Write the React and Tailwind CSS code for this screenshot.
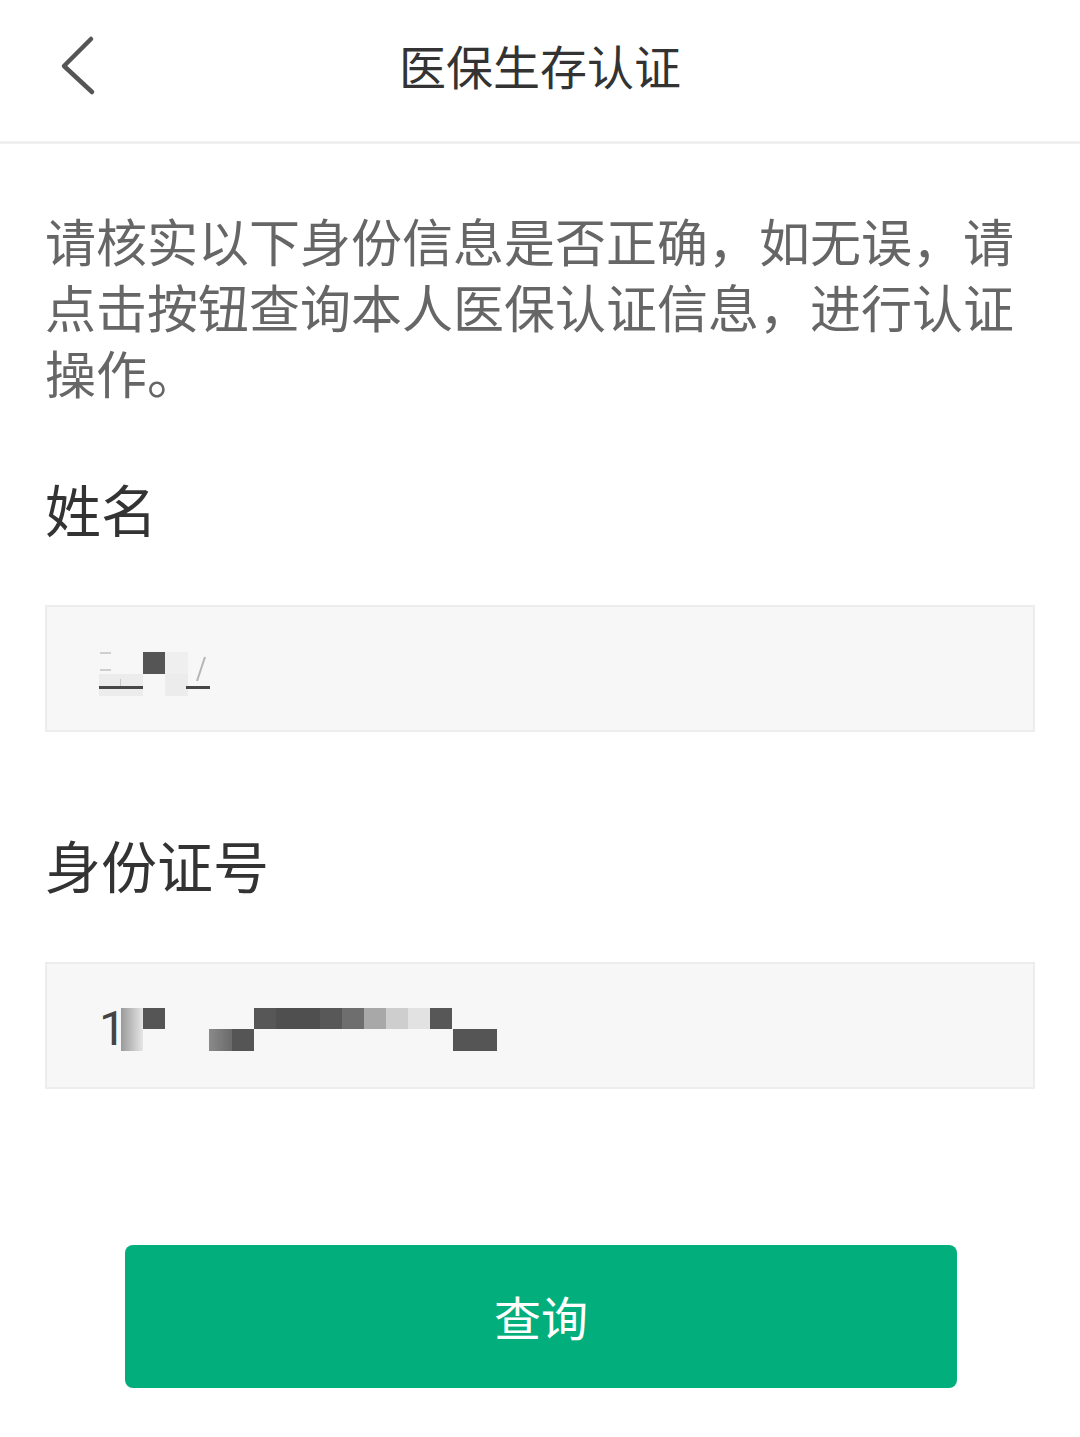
import React from 'react';

const font = { fontFamily: '"Noto Sans CJK SC", "Noto Sans", sans-serif' };

// pixelated name, as in the screenshot
const NameMosaic = () => (
  <svg width="115" height="56" viewBox="0 0 115 56">
    <rect x="1" y="7" width="11" height="2" fill="#cfcfcf" />
    <rect x="1" y="24" width="11" height="2" fill="#cfcfcf" />
    <rect x="0" y="29" width="44" height="22" fill="#ececec" />
    <rect x="21" y="34" width="1" height="8" fill="#c8c8c8" />
    <rect x="0" y="41" width="44" height="3" fill="#474747" />
    <rect x="44" y="7" width="22" height="22" fill="#555555" />
    <rect x="66" y="7" width="23" height="22" fill="#efefef" />
    <rect x="66" y="29" width="23" height="22" fill="#ececec" />
    <line x1="106" y1="12" x2="98" y2="36" stroke="#b5b5b5" strokeWidth="2" />
    <rect x="87" y="41" width="24" height="3" fill="#474747" />
  </svg>
);

const idRow = ['#575757', '#4f4f4f', '#4f4f4f', '#585858', '#6e6e6e', '#a8a8a8', '#cecece', '#e2e2e2', '#575757'];

const IdMosaic = () => (
  <svg width="380" height="56" viewBox="0 0 380 56">
    <defs>
      <linearGradient id="fadeA" x1="0" x2="1" y1="0" y2="0">
        <stop offset="0" stopColor="#8c8c8c" />
        <stop offset="1" stopColor="#e6e6e6" />
      </linearGradient>
      <linearGradient id="fadeB" x1="0" x2="1" y1="0" y2="0">
        <stop offset="0" stopColor="#8a8a8a" />
        <stop offset="1" stopColor="#6a6a6a" />
      </linearGradient>
    </defs>
    <rect x="-4" y="7" width="26" height="43" fill="url(#fadeA)" />
    <rect x="22" y="7" width="22" height="21" fill="#555555" />
    <rect x="88" y="28" width="23" height="22" fill="url(#fadeB)" />
    <rect x="111" y="28" width="22" height="22" fill="#555555" />
    {idRow.map((c, i) => (
      <rect key={i} x={133 + i * 22} y="7" width="22" height="21" fill={c} />
    ))}
    <rect x="332" y="28" width="44" height="22" fill="#555555" />
  </svg>
);

const Field = ({ children, pt }) => (
  <div className={`h-[127px] bg-[#f7f7f7] border-2 border-[#ededed] flex items-center pl-[52px] ${pt}`}>
    {children}
  </div>
);

export default function App() {
  return (
    <div className="w-[1080px] min-h-[1437px] bg-white" style={font}>
      <header className="relative h-[144px] flex items-center justify-center border-b-[3px] border-[#f0f0f0]">
        <svg className="absolute left-[56px] top-[34px]" width="42" height="64" viewBox="0 0 42 64">
          <polyline points="35,5 8,32 36,58" fill="none" stroke="#555" strokeWidth="4.5" strokeLinecap="round" strokeLinejoin="round" />
        </svg>
        <h1 className="text-[47px] leading-none text-[#333] -mt-[12px]">医保生存认证</h1>
      </header>

      <main className="px-[45px]">
        <p className="mt-[63px] w-[990px] text-[51px] leading-[66px] text-[#666]">
          请核实以下身份信息是否正确，如无误，请点击按钮查询本人医保认证信息，进行认证操作。
        </p>

        <div className="mt-[73px] text-[56px] leading-[60px] text-[#333]">姓名</div>
        <div className="mt-[67px]">
          <Field pt="pt-[9px]">
            <NameMosaic />
          </Field>
        </div>

        <div className="mt-[102px] text-[56px] leading-[60px] text-[#333]">身份证号</div>
        <div className="mt-[68px]">
          <Field pt="pt-[6px]">
            <span
              className="w-[22px] text-[48px] leading-none text-[#444] relative z-10"
              style={{ fontFamily: 'Roboto, "Noto Sans", sans-serif' }}
            >
              1
            </span>
            <IdMosaic />
          </Field>
        </div>

        <div className="mt-[156px] px-[80px]">
          <button className="w-[832px] h-[143px] rounded-[8px] bg-[#02ae7c] text-white text-[47px] flex items-center justify-center">
            查询
          </button>
        </div>
      </main>
    </div>
  );
}
